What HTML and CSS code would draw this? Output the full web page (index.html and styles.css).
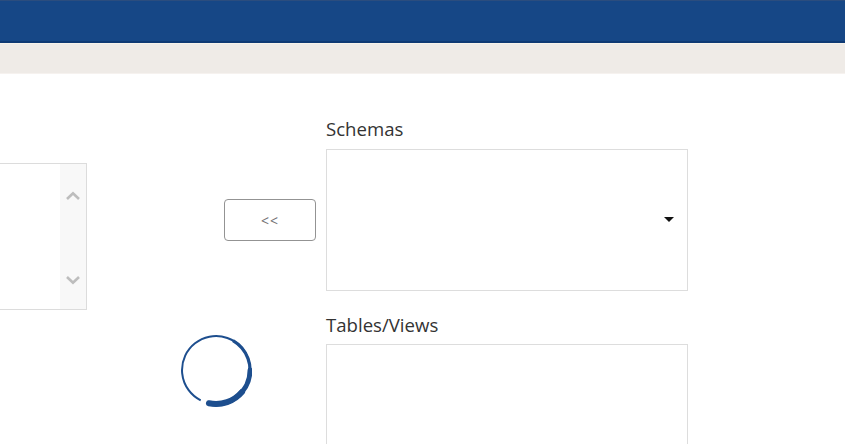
FILE: index.html
```html
<!DOCTYPE html>
<html lang="en">
<head>
<meta charset="utf-8">
<title>Schemas</title>
<link rel="stylesheet" href="styles.css">
</head>
<body>
<header class="topbar"></header>
<div class="toolbar"></div>
<main class="main">
  <section class="left-col">
    <div class="listbox">
      <div class="list-body"></div>
      <div class="scroll-lane">
        <svg class="chev" width="16" height="10" viewBox="0 0 16 10"><path d="M2 8 L8 2.2 L14 8" fill="none" stroke="#bdbdbd" stroke-width="2.6"/></svg>
        <svg class="chev" width="16" height="10" viewBox="0 0 16 10"><path d="M2 2 L8 7.8 L14 2" fill="none" stroke="#bdbdbd" stroke-width="2.6"/></svg>
      </div>
    </div>
  </section>
  <section class="mid-col">
    <button class="move-btn" type="button">&lt;&lt;</button>
    <svg class="spinner" width="72" height="74" viewBox="-36 -36 72 74">
      <path d="M-15.3 30.36 A34 34 0 1 1 -7.07 33.26" fill="none" stroke="#1d4e8e" stroke-width="2"/>
      <path d="M17 -29.44 A34 34 0 0 1 -7.07 33.26" fill="none" stroke="#1d4e8e" stroke-width="3.2"/>
      <path d="M34 0 A34 34 0 0 1 -7.07 33.26" fill="none" stroke="#1d4e8e" stroke-width="4.8" stroke-linecap="round"/>
      <path d="M26.05 21.86 A34 34 0 0 1 -7.07 33.26" fill="none" stroke="#1d4e8e" stroke-width="6" stroke-linecap="round"/>
    </svg>
  </section>
  <section class="right-col">
    <label class="field-label">Schemas</label>
    <div class="select-box">
      <span class="caret"></span>
    </div>
    <label class="field-label second">Tables/Views</label>
    <div class="list-box-right"></div>
  </section>
</main>
</body>
</html>
```
FILE: styles.css
```css
* { box-sizing: border-box; }
html, body { margin: 0; padding: 0; }
body {
  width: 845px;
  height: 444px;
  overflow: hidden;
  background: #ffffff;
  font-family: "Open Sans", "Noto Sans", sans-serif;
}
.topbar {
  height: 43px;
  background: #164786;
  border-top: 1px solid #2b4d7e;
  border-bottom: 2px solid #0f3a74;
}
.toolbar {
  height: 31px;
  background: #efebe7;
  border-top: 1px solid #f7f3ea;
  border-bottom: 1px solid #f6f2ef;
}
.main {
  display: flex;
  align-items: flex-start;
}
.left-col {
  padding-top: 89px;
  margin-left: -12px;
}
.listbox {
  width: 99px;
  height: 147px;
  border: 1px solid #dcdcdc;
  display: flex;
}
.list-body { flex: 1; }
.scroll-lane {
  width: 26px;
  background: #f8f8f8;
  display: flex;
  flex-direction: column;
  align-items: center;
  justify-content: space-between;
  padding: 27px 0 24px;
}
.chev { display: block; }
.mid-col {
  margin-left: 137px;
  padding-top: 125px;
  width: 92px;
  display: flex;
  flex-direction: column;
}
.move-btn {
  width: 92px;
  height: 42px;
  border: 1px solid #939393;
  border-radius: 4px;
  background: #ffffff;
  color: #737373;
  font-family: "Open Sans", sans-serif;
  font-size: 14px;
  padding: 0;
  letter-spacing: 1px;
}
.spinner {
  display: block;
  margin-top: 93px;
  margin-left: -44px;
}
.right-col {
  margin-left: 10px;
  padding-top: 43px;
  width: 362px;
  display: flex;
  flex-direction: column;
}
.field-label {
  display: block;
  font-size: 18.6px;
  line-height: 24px;
  color: #333333;
  margin-bottom: 8px;
}
.field-label.second {
  margin-top: 22px;
  margin-bottom: 7px;
}
.select-box {
  height: 142px;
  border: 1px solid #dddddd;
  display: flex;
  align-items: center;
  justify-content: flex-end;
  padding-right: 13px;
}
.caret {
  width: 0;
  height: 0;
  border-left: 5px solid transparent;
  border-right: 5px solid transparent;
  border-top: 5px solid #111111;
  margin-top: -2px;
}
.list-box-right {
  height: 120px;
  border: 1px solid #dddddd;
}
```
